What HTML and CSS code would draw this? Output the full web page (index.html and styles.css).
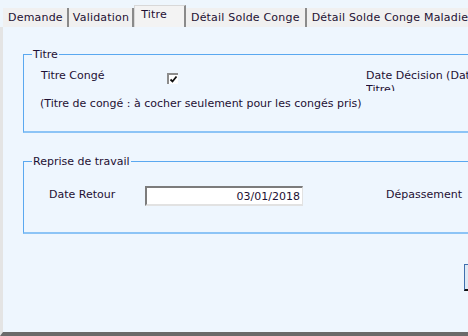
FILE: index.html
```html
<!DOCTYPE html>
<html lang="fr">
<head>
    <meta charset="UTF-8">
    <title>Titre</title>
    <link rel="stylesheet" href="styles.css">
</head>
<body>
    <div class="tabs">
        <div class="tab">Demande</div>
        <div class="tab tab-narrow">Validation</div>
        <div class="tab active">Titre</div>
        <div class="tab">Détail Solde Conge</div>
        <div class="tab">Détail Solde Conge Maladie</div>
    </div>
    <div class="panel">
        <fieldset class="group group-titre">
            <legend>Titre</legend>
            <div class="row">
                <span class="label label-conge">Titre Congé</span>
                <span class="check">
                    <svg width="9" height="9" viewBox="0 0 9 9"><path d="M1.5 4.5 L3.5 6.5 L7.5 1.5" fill="none" stroke="#111" stroke-width="1.8"/></svg>
                </span>
                <span class="label label-decision">Date Décision (Date Titre)</span>
            </div>
            <div class="note">(Titre de congé : à cocher seulement pour les congés pris)</div>
        </fieldset>
        <fieldset class="group group-reprise">
            <legend>Reprise de travail</legend>
            <div class="row">
                <span class="label label-retour">Date Retour</span>
                <input class="date" type="text" value="03/01/2018">
                <span class="label label-depassement">Dépassement</span>
            </div>
        </fieldset>
        <div class="actions">
            <button class="btn">OK</button>
        </div>
    </div>
</body>
</html>
```
FILE: styles.css
```css
body {
    margin: 0;
    width: 468px;
    height: 336px;
    overflow: hidden;
    background-color: #eef6fd;
    font-family: 'DejaVu Sans', sans-serif;
    font-size: 11px;
    line-height: 13px;
    color: #1e1033;
}

.tabs {
    display: flex;
    align-items: flex-end;
    height: 27px;
    padding-left: 3px;
    white-space: nowrap;
    letter-spacing: 0.2px;
}

.tab {
    height: 19px;
    line-height: 20px;
    padding: 0 5px;
    background-color: #f0f0f0;
    border-right: 2px solid #8a8a8a;
    flex-shrink: 0;
}

.tab:first-child {
    padding: 0 4px 0 5px;
}

.tab-narrow {
    padding: 0 3px 0 4px;
}

.tab.active {
    height: 21px;
    line-height: 17px;
    padding: 0 17px 0 6px;
    background-color: #f3f3f3;
    border-left: 1px solid #d8d8d8;
    border-top: 1px solid #d8d8d8;
}

.panel {
    box-sizing: border-box;
    height: 309px;
    border-left: 3px solid #e4e4e4;
    border-bottom: 4px solid #6a6a6a;
    background-color: #eef6fe;
    padding-top: 21px;
}

.group {
    margin: 0 0 0 20px;
    padding: 0;
    width: 520px;
    border: 1px solid #5aa8f0;
    border-bottom: 2px solid #8cc4f6;
}

.group legend {
    margin-left: 8px;
    padding: 0 1px;
    line-height: 13px;
}

.row {
    display: flex;
    align-items: flex-start;
    white-space: nowrap;
}

.group-titre {
    height: 82px;
}

.group-titre .row {
    padding: 8px 0 0 17px;
    height: 28px;
}

.label-conge {
    width: 126px;
}

.check {
    display: flex;
    align-items: center;
    justify-content: center;
    width: 9px;
    height: 9px;
    margin-top: 4px;
    border-top: 2px solid #8c8c8c;
    border-left: 2px solid #8c8c8c;
    background-color: #ffffff;
}

.label-decision {
    margin-left: 188px;
    width: 130px;
    white-space: normal;
    line-height: 14px;
    height: 22px;
    overflow: hidden;
}

.note {
    padding-left: 16px;
}

.group-reprise {
    margin-top: 22px;
    height: 76px;
}

.group-reprise .row {
    padding: 18px 0 0 25px;
}

.label-retour {
    width: 96px;
    padding-top: 2px;
}

.date {
    box-sizing: border-box;
    width: 158px;
    height: 20px;
    margin: 0;
    padding: 0 2px 0 0;
    border-top: 2px solid #7c7c7c;
    border-left: 2px solid #7c7c7c;
    border-right: 1px solid #e2e2e2;
    border-bottom: 2px solid #e2e2e2;
    background-color: #ffffff;
    font-family: 'DejaVu Sans', sans-serif;
    font-size: 11px;
    color: #1e1033;
    text-align: right;
}

.label-depassement {
    margin-left: 83px;
    padding-top: 2px;
}

.actions {
    padding: 30px 0 0 461px;
}

.btn {
    width: 60px;
    height: 27px;
    border: 1px solid #3f6fae;
    border-bottom: 2px solid #111;
    background-color: #dfe9f5;
    font-family: 'DejaVu Sans', sans-serif;
    font-size: 11px;
}
```
